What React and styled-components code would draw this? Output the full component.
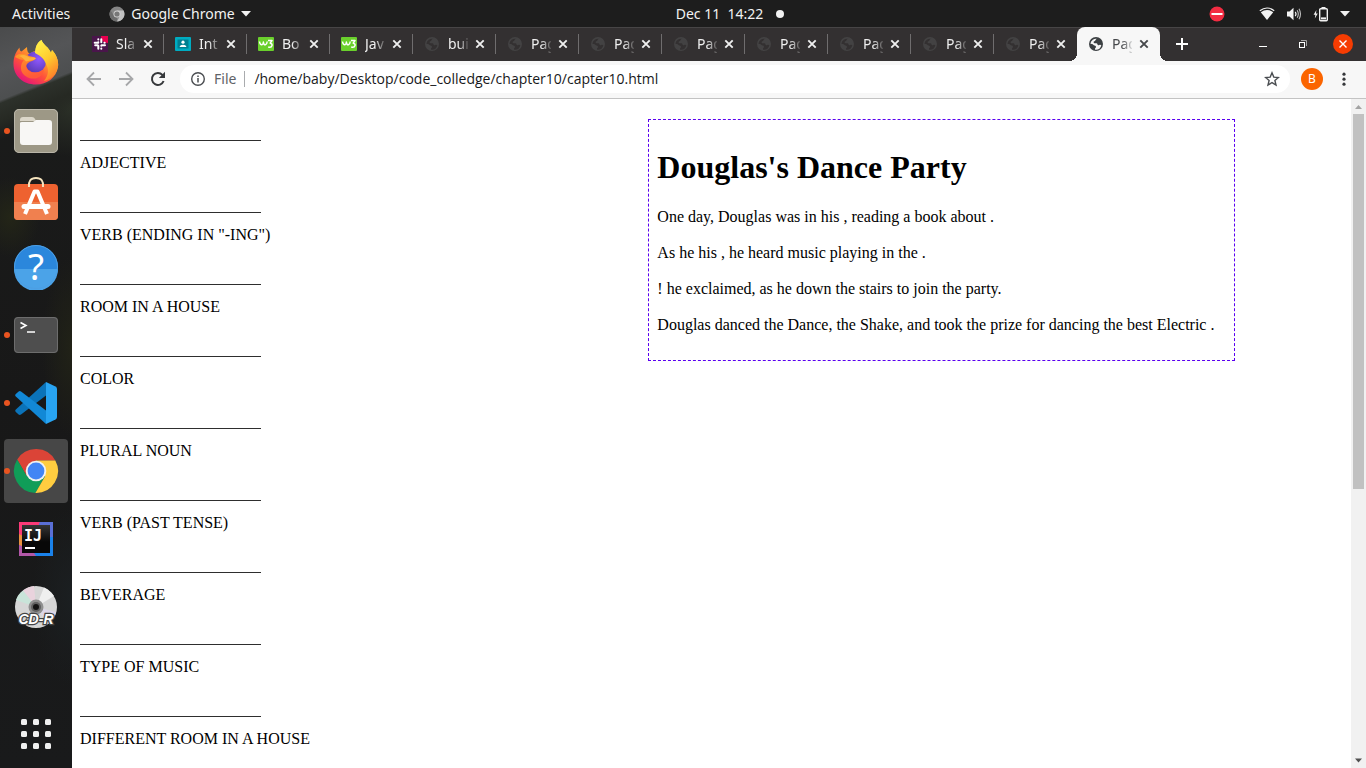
import React from 'react';
import styled, { createGlobalStyle } from 'styled-components';

const UI_FONT = '"Noto Sans", "Open Sans", sans-serif';
const PAGE_FONT = '"Liberation Serif", "Times New Roman", serif';

const GlobalStyle = createGlobalStyle`
  * { box-sizing: border-box; }
  body { margin: 0; background: #1d1d1d; }
  button { border: 0; padding: 0; background: none; color: inherit; font: inherit; }
  svg { display: block; flex: none; }
`;

const Desktop = styled.div`
  display: flex;
  flex-direction: column;
  min-height: 100vh;
  font-family: ${UI_FONT};
`;

/* ---------- GNOME top bar ---------- */

const TopBar = styled.header`
  display: grid;
  grid-template-columns: 676fr auto 582fr;
  align-items: center;
  height: 27px;
  background: #1d1d1d;
  color: #f2f2f2;
  font-size: 14px;
  line-height: 20px;
`;

const TopLeft = styled.div`
  display: flex;
  align-items: center;
  padding-left: 12px;
  gap: 39px;
`;

const AppMenu = styled.button`
  display: flex;
  align-items: center;
  gap: 6px;
`;

const Clock = styled.button`
  display: flex;
  align-items: center;
  gap: 13px;
  white-space: pre;
`;

const Tray = styled.div`
  display: flex;
  align-items: center;
  justify-content: flex-end;
  padding-right: 16px;
`;

const TrayGroup = styled.button`
  display: flex;
  align-items: center;
  gap: 11px;
  margin-left: 34px;
`;

/* ---------- Dock ---------- */

const Workspace = styled.div`
  display: flex;
  flex: 1;
`;

const Dock = styled.nav`
  display: flex;
  flex-direction: column;
  gap: 4px;
  width: 72px;
  padding: 4px 4px 2px;
  background:
    linear-gradient(158deg, #4a4b4c 0, #545557 40px, #4d4f50 68px, #2d312b 71px, #262923 88px, transparent 105px),
    radial-gradient(ellipse 50px 50px at 72px 80px, #2b3027, transparent),
    radial-gradient(ellipse 30px 40px at 10px 190px, #232517, transparent),
    radial-gradient(ellipse 30px 90px at 72px 320px, #212217, transparent),
    radial-gradient(ellipse 40px 90px at 72px 570px, #1b1f21, transparent),
    linear-gradient(#1b1c1b, #181818 50%, #191a1b);
`;

const DockItem = styled.button`
  position: relative;
  display: flex;
  align-items: center;
  justify-content: center;
  width: 64px;
  height: 64px;
  border-radius: 4px;
  background: ${(p) => (p.$active ? '#474747' : 'transparent')};
  &:last-child { margin-top: auto; }
`;

const RunningDot = styled.span`
  position: absolute;
  left: 0;
  top: 29px;
  width: 6px;
  height: 6px;
  border-radius: 50%;
  background: #e95420;
`;

/* ---------- Browser ---------- */

const Browser = styled.main`
  display: flex;
  flex-direction: column;
  flex: 1;
  min-width: 0;
`;

const TabStrip = styled.div`
  display: flex;
  align-items: stretch;
  height: 34px;
  padding-left: 9px;
  background: #333031;
  box-shadow: inset 0 1px #474546;
  color: #efefef;
`;

const TabBox = styled.div`
  position: relative;
  display: flex;
  align-items: center;
  width: 83px;
  padding-left: 11px;
  border-radius: 8px 8px 0 0;
  background: ${(p) => (p.$active ? '#f7f7f7' : 'transparent')};
  color: ${(p) => (p.$active ? '#45474a' : '#efefef')};

  &::before, &::after {
    content: '';
    display: ${(p) => (p.$active ? 'block' : 'none')};
    position: absolute;
    bottom: 0;
    width: 8px;
    height: 8px;
  }
  &::before {
    right: 100%;
    background: radial-gradient(circle at 0 0, transparent 8px, #f7f7f7 8px);
  }
  &::after {
    left: 100%;
    background: radial-gradient(circle at 100% 0, transparent 8px, #f7f7f7 8px);
  }
`;

const TabLabel = styled.button`
  width: 20px;
  margin-left: 8px;
  overflow: hidden;
  text-align: left;
  white-space: nowrap;
  font-size: 14px;
  line-height: 20px;
  mask-image: linear-gradient(to right, #000 10px, transparent 22px);
`;

const TabClose = styled.button`
  margin-left: 4px;
`;

const TabDivider = styled.span`
  width: 1px;
  height: 20px;
  margin-left: auto;
  background: ${(p) => (p.$hidden ? 'transparent' : '#6f6d6e')};
`;

const NewTab = styled.button`
  margin-left: 14px;
`;

const WindowControls = styled.div`
  display: flex;
  align-items: center;
  gap: 20px;
  margin-left: auto;
  padding-right: 13px;
`;

const Toolbar = styled.div`
  display: flex;
  align-items: center;
  height: 38px;
  padding: 0 14px 2px 14px;
  background: #f7f7f7;
  border-bottom: 1px solid #c3c3c3;
`;

const NavButtons = styled.div`
  display: flex;
  gap: 16px;
`;

const Omnibox = styled.div`
  display: flex;
  align-items: center;
  flex: 1;
  height: 28px;
  margin-left: 14px;
  padding: 0 10px;
  border-radius: 14px;
  background: #fff;
`;

const Scheme = styled.label`
  margin-left: 8px;
  padding-right: 8px;
  color: #5f6368;
  font-size: 14px;
  line-height: 16px;
  border-right: 1px solid #a9abae;
`;

const Address = styled.input`
  flex: 1;
  min-width: 0;
  padding: 0;
  margin-left: 9px;
  border: 0;
  outline: 0;
  background: transparent;
  color: #17181a;
  font-family: "Open Sans", "Noto Sans", sans-serif;
  font-size: 14px;
  line-height: 20px;
`;

const Avatar = styled.button`
  width: 22px;
  height: 22px;
  margin: 0 13px 0 11px;
  border-radius: 50%;
  background: #fb6500;
  color: #fff;
  font-size: 12px;
  line-height: 22px;
`;

/* ---------- Web page ---------- */

const Viewport = styled.div`
  display: flex;
  flex: 1;
  background: #fff;
`;

const Page = styled.div`
  display: flex;
  align-items: flex-start;
  flex: 1;
  padding: 20px 8px 0;
  color: #000;
  font-family: ${PAGE_FONT};
  font-size: 16px;
`;

const WordForm = styled.form`
  display: flex;
  flex-direction: column;
  gap: 20px;
  width: 45%;
`;

const Field = styled.div`
  display: flex;
  flex-direction: column;
  align-items: flex-start;
  gap: 13px;
`;

const WordInput = styled.input`
  width: 181px;
  height: 22px;
  padding: 0;
  border: 0;
  border-bottom: 1px solid #2e2e2e;
  outline: 0;
  background: transparent;
`;

const FieldLabel = styled.label`
  height: 17px;
  line-height: 18px;
`;

const Story = styled.article`
  box-sizing: content-box;
  width: 45%;
  padding: 8px 8px 9px;
  border: 1px dashed #5a00f0;
`;

const StoryTitle = styled.h1`
  margin: 21px 0;
  font-size: 32px;
  line-height: 37px;
`;

const StoryLine = styled.p`
  margin: 16px 0;
  line-height: 20px;
`;

const Scrollbar = styled.div`
  display: flex;
  flex-direction: column;
  width: 15px;
  background: #f1f1f1;
`;

const ScrollTrack = styled.div`
  display: flex;
  flex-direction: column;
  flex: 1;
  padding: 0 2px;

  &::after {
    content: '';
    flex: 264 0 0;
  }
`;

const ScrollThumb = styled.div`
  flex: 375 0 0;
  background: #c1c1c1;
`;

/* ---------- Icons ---------- */

const Caret = () => (
  <svg width="10" height="6" viewBox="0 0 10 6"><path d="M0 0H10L5 5.5Z" fill="#f2f2f2" /></svg>
);

const GreyChrome = () => (
  <svg width="16" height="16" viewBox="0 0 16 16">
    <circle cx="8" cy="8" r="7.5" fill="#868686" />
    <path d="M8 4.5H14.6A7.5 7.5 0 0 1 8 15.5L11 9.8Z" fill="#c2c2c2" />
    <path d="M1.5 4.2L5 9.8L8 11.4L8 15.5A7.5 7.5 0 0 1 1.5 4.2Z" fill="#6d6d6d" />
    <circle cx="8" cy="8" r="3.5" fill="#d2d2d2" />
    <circle cx="8" cy="8" r="2.6" fill="#777" />
  </svg>
);

const Busy = () => (
  <svg width="16" height="16" viewBox="0 0 16 16">
    <circle cx="8" cy="8" r="7.5" fill="#f22c42" />
    <rect x="2.5" y="7" width="11" height="2" fill="#fff" />
  </svg>
);

const Wifi = () => (
  <svg width="16" height="14" viewBox="0 0 16 14">
    <path d="M.8 3.8Q8-1.8 15.2 3.8" fill="none" stroke="#f2f2f2" strokeWidth="1.2" />
    <path d="M1.8 5.2Q8 1 14.2 5.2L8 13Z" fill="#f2f2f2" />
  </svg>
);

const Volume = () => (
  <svg width="16" height="14" viewBox="0 0 16 14">
    <path d="M1 4.5H3.5L7.5.8V13.2L3.5 9.5H1Z" fill="#f2f2f2" />
    <path d="M9.3 4.8Q10.8 7 9.3 9.2" fill="none" stroke="#f2f2f2" strokeWidth="1.3" />
    <path d="M11.2 3.2Q13.4 7 11.2 10.8M13 1.8Q16 7 13 12.2" fill="none" stroke="#bdbdbd" strokeWidth="1.1" />
  </svg>
);

const Battery = () => (
  <svg width="16" height="16" viewBox="0 0 16 16">
    <path d="M3.4 4L.6 8.8H2.4L1.8 12.4L4.8 7.4H3Z" fill="#f2f2f2" />
    <rect x="6.7" y="2.7" width="7.6" height="12" rx="1" fill="none" stroke="#f2f2f2" strokeWidth="1.4" />
    <rect x="8.5" y="1" width="4" height="1.6" fill="#f2f2f2" />
    <rect x="8" y="11.4" width="5" height="2" fill="#f2f2f2" />
  </svg>
);

const CloseX = () => (
  <svg width="16" height="16" viewBox="0 0 16 16">
    <path d="M4.3 4.3L11.7 11.7M11.7 4.3L4.3 11.7" stroke="currentColor" strokeWidth="1.9" />
  </svg>
);

const Globe = ({ color }) => (
  <svg width="16" height="16" viewBox="0 0 16 16">
    <path
      fill={color}
      fillRule="evenodd"
      d="M8 1A7 7 0 1 0 8 15A7 7 0 1 0 8 1ZM9.4 2.9C8.2 2.8 7.6 3.5 7.3 4.5C7 5.3 5.7 5 5.6 6C5.5 7 6.2 7.3 7.3 7.3C8.8 7.2 9.4 7.5 9.5 8.6C9.6 9.6 10.6 9.4 11.3 9.1C12.2 8.6 12.9 8.9 13.3 9.6A5.7 5.7 0 0 1 7.1 13.7C7 12.5 7 12 7.9 11.5C8.2 10.3 7.5 9.6 6.5 9.6C5.5 9.5 5.1 8.4 4 8.1L2.4 7.7A5.7 5.7 0 0 1 9.4 2.9Z"
    />
  </svg>
);

const SlackIcon = () => (
  <svg width="16" height="16" viewBox="0 0 16 16">
    <rect width="16" height="16" fill="#4a154b" />
    <path d="M9 0H16V7Q9 7 9 0Z" fill="#e8004f" />
    <g stroke="#fff" strokeWidth="2" strokeLinecap="round">
      <path d="M9.300 3.200V6.300M2.700 6.700H6M6.300 9.700V12.800M10 9.300H13" />
      <path d="M6.300 3.300V3.600M12.400 6.700H12.700M9.300 12.400V12.700M3.200 9.300H5.600M9.300 9.500V9.800M6.300 6.200V6.500" />
    </g>
  </svg>
);

const ContactIcon = () => (
  <svg width="16" height="16" viewBox="0 0 16 16">
    <rect y="1" width="16" height="14" rx="1" fill="#00acc1" />
    <rect x="2.5" y="3.5" width="11" height="9" fill="#007f91" />
    <circle cx="8" cy="6.2" r="1.6" fill="#fff" />
    <path d="M4.8 11V10Q8 7.4 11.2 10V11Z" fill="#fff" />
  </svg>
);

const W3Icon = () => (
  <svg width="16" height="16" viewBox="0 0 16 16">
    <rect y="1" width="16" height="14" rx="1" fill="#6ad02c" />
    <path d="M1.5 5.5Q2 9 4 8.7Q5.3 8.4 5.4 6Q5.6 9 7.5 8.7Q9 8.3 9.2 5.5M10 4.5H14L12.2 7.2Q14.4 7.6 14 9.6Q13.4 11.8 10.2 11" fill="none" stroke="#fff" strokeWidth="1.5" strokeLinejoin="round" />
  </svg>
);

const Plus = () => (
  <svg width="16" height="16" viewBox="0 0 16 16"><path d="M8 2V14M2 8H14" stroke="#fff" strokeWidth="2" /></svg>
);

const Minimise = () => (
  <svg width="20" height="20" viewBox="0 0 20 20"><path d="M6 12.5H14" stroke="#fff" /></svg>
);

const Restore = () => (
  <svg width="20" height="20" viewBox="0 0 20 20">
    <rect x="6.5" y="8.5" width="5" height="5" fill="none" stroke="#fff" />
    <path d="M8 6.5H13.5V12" fill="none" stroke="#a5a4a4" />
  </svg>
);

const WindowClose = () => (
  <svg width="20" height="20" viewBox="0 0 20 20">
    <circle cx="10" cy="10" r="10" fill="#f63c02" />
    <path d="M6.5 6.5L13.5 13.5M13.5 6.5L6.5 13.5" stroke="#fff" strokeWidth="1.4" />
  </svg>
);

const ArrowIcon = ({ flip }) => (
  <svg width="16" height="16" viewBox="0 0 16 16">
    <path d={flip ? 'M1 8H14M8 1.5L14.5 8L8 14.5' : 'M15 8H2M8 1.5L1.5 8L8 14.5'} fill="none" stroke="#a6a7a9" strokeWidth="1.8" />
  </svg>
);

const Reload = () => (
  <svg width="16" height="16" viewBox="0 0 16 16">
    <path d="M13.6 10A6 6 0 1 1 12.4 3.9L14 5.6" fill="none" stroke="#36383b" strokeWidth="2" />
    <path d="M15 .8V7H8.8Z" fill="#36383b" />
  </svg>
);

const Info = () => (
  <svg width="16" height="16" viewBox="0 0 16 16">
    <circle cx="8" cy="8" r="6.3" fill="none" stroke="#4a4d51" strokeWidth="1.4" />
    <path d="M8 7V11.5M8 4.4V6" stroke="#4a4d51" strokeWidth="1.5" />
  </svg>
);

const Star = () => (
  <svg width="16" height="16" viewBox="0 0 16 16">
    <path d="M8 1.8L9.8 6.1L14.4 6.5L10.9 9.5L12 14L8 11.6L4 14L5.1 9.5L1.6 6.5L6.2 6.1Z" fill="none" stroke="#4a4d51" strokeWidth="1.4" />
  </svg>
);

const MenuDots = () => (
  <svg width="16" height="16" viewBox="0 0 16 16" fill="#36383b" >
    <circle cx="8" cy="3.2" r="1.6" /><circle cx="8" cy="8.2" r="1.6" /><circle cx="8" cy="13.2" r="1.6" />
  </svg>
);

const ScrollArrow = ({ down }) => (
  <svg width="15" height="15" viewBox="0 0 15 15">
    <path d={down ? 'M4 5.5H11L7.5 9.5Z' : 'M4 10H11L7.5 6Z'} fill={down ? '#505050' : '#a3a3a3'} />
  </svg>
);

const Firefox = () => (
  <svg width="46" height="48" viewBox="0 0 46 48">
    <defs>
      <linearGradient id="ffBody" x1=".8" y1=".1" x2=".2" y2=".95">
        <stop offset="0" stopColor="#fff44f" /><stop offset=".35" stopColor="#ffa02a" />
        <stop offset=".65" stopColor="#ff4f3c" /><stop offset="1" stopColor="#e3127c" />
      </linearGradient>
      <linearGradient id="ffTail" x1=".2" y1="0" x2=".7" y2="1">
        <stop offset="0" stopColor="#fff14a" /><stop offset=".5" stopColor="#ffcb2e" /><stop offset="1" stopColor="#ff7a29" />
      </linearGradient>
      <linearGradient id="ffHead" x1="0" y1="0" x2=".3" y2="1">
        <stop offset="0" stopColor="#ff9a26" /><stop offset="1" stopColor="#ff5a38" />
      </linearGradient>
      <radialGradient id="ffGlobe" cx=".65" cy=".35" r=".7">
        <stop offset="0" stopColor="#9059ff" /><stop offset="1" stopColor="#5b3bb8" />
      </radialGradient>
    </defs>
    <path d="M28.5 1C30 6 36 8 38 14L39 11C43 15 46 22 45 28C43 39 34 45.500 23 45.500C10 45.500 .5 37 .5 25C.5 19 2 14 6.5 8.500C6.500 11 7 12 8.500 12.500C10.500 11 12 9.500 14 8C14 12 15 14 17 15C19 13 21 12 23 12C22 7 25 3 28.500 1Z" fill="url(#ffBody)" />
    <circle cx="22.500" cy="23" r="10.500" fill="url(#ffGlobe)" />
    <path d="M28.500 1C30 6 36 8 38 14L39 11C43 15 46 22 45 28C43 36 37 41 31 42C36 36 36 30 33 25C31 20 28 17 22 14C22 8 25 3 28.500 1Z" fill="url(#ffTail)" />
    <path d="M2 18C5 14 11 14 16 17C19 18 22 18 23 19.500C21 22 17 22 15 24C12 26 13 31 18 33C23 34.500 28 33 31 30C31 38 21 42 14 38C6 34 7 25 11 21C7 21 5 19 2 18Z" fill="url(#ffHead)" />
    <path d="M6 17C11 14.500 14 17 17 18.500C20 18 22 18.500 23 19.500C20 22 16 21.500 13 22.500C11 20 9 18 6 17Z" fill="#ffb13b" />
  </svg>
);

const Files = () => (
  <svg width="46" height="46" viewBox="0 0 46 46">
    <rect x="1" y="1" width="44" height="44" rx="5" fill="#9d9886" />
    <rect x="1.500" y="1.500" width="43" height="43" rx="4.500" fill="none" stroke="#b9b5a8" />
    <path d="M7 12Q7 9 10 9H19Q21 9 22 11L23 13H7Z" fill="#dcd7ca" />
    <path d="M7 15Q7 14 9 14H20L23 12H36Q39 12 39 15V34Q39 37 36 37H10Q7 37 7 34Z" fill="#f8f7f5" />
  </svg>
);

const Software = () => (
  <svg width="46" height="50" viewBox="0 0 46 50">
    <rect x="1" y="10" width="44" height="36" rx="4" fill="#ee6230" />
    <path d="M1 28H45V42Q45 46 41 46H5Q1 46 1 42Z" fill="#f0804f" />
    <path d="M16 13Q15 4 23 4T30 13" fill="none" stroke="#f5e3bd" strokeWidth="2" />
    <g stroke="#fff" fill="none" strokeLinejoin="round">
      <path d="M12 40L21.500 17.500H24.500L34 40" strokeWidth="4" />
      <path d="M11 32.500H35" strokeWidth="5" strokeLinecap="round" />
    </g>
  </svg>
);

const Help = () => (
  <svg width="46" height="46" viewBox="0 0 46 46">
    <circle cx="23" cy="23" r="22" fill="#2b87dc" />
    <path d="M1 25H45A22 22 0 0 1 1 25Z" fill="#4ba3e8" />
    <circle cx="23" cy="23" r="21.500" fill="none" stroke="#4d9fe4" />
    <text x="23" y="36" textAnchor="middle" fill="#fff" fontFamily='"Noto Sans", sans-serif' fontSize="37">?</text>
  </svg>
);

const Terminal = () => (
  <svg width="46" height="38" viewBox="0 0 46 38">
    <rect x="1" y="1" width="44" height="36" rx="4" fill="#4e4e4e" />
    <rect x="1.500" y="1.500" width="43" height="35" rx="3.500" fill="none" stroke="#6d6d6d" />
    <path d="M7.500 6.500L13 9.500L7.500 12.500M14 16H22" fill="none" stroke="#fff" strokeWidth="1.600" />
  </svg>
);

const VSCode = () => (
  <svg width="42" height="42" viewBox="0 0 42 42">
    <path d="M31 0L.8 27.500Q-.4 28.800.8 30L3.600 32.600Q4.800 33.500 6 32.600L31 13.500Z" fill="#0b73b9" />
    <path d="M31 42L.8 14.500Q-.4 13.200.8 12L3.600 9.400Q4.800 8.500 6 9.400L31 28.500Z" fill="#1288d6" />
    <path d="M31 0L40.500 4.500Q42 5.300 42 7V35Q42 36.700 40.500 37.500L31 42Z" fill="#28a4f2" />
  </svg>
);

const Chrome = () => (
  <svg width="46" height="46" viewBox="-23 -23 46 46">
    <path d="M19.300-10.500A22 22 0 0 0-18.800-11.500L-9.100 5.200L0 0V-10.500Z" fill="#db4437" />
    <path d="M-18.800-11.500A22 22 0 0 0-.6 22L9.100 5.200L0 0L-9.100 5.200Z" fill="#109d58" />
    <path d="M-.6 22A22 22 0 0 0 19.300-10.500H0V0L9.100 5.200Z" fill="#ffcd40" />
    <circle r="10.300" fill="#f1f1f1" />
    <circle r="8.400" fill="#4285f4" />
  </svg>
);

const IntelliJ = () => (
  <svg width="36" height="36" viewBox="0 0 36 36">
    <defs>
      <linearGradient id="ijDark" x1="0" y1="0" x2="0" y2="1">
        <stop offset="0" stopColor="#353535" /><stop offset=".6" stopColor="#080808" />
      </linearGradient>
    </defs>
    <rect x="1" y="1" width="34" height="34" fill="#1a82ea" />
    <path d="M1 1H22L18 18L1 20Z" fill="#fb3a78" />
    <path d="M22 1H35V16H16Z" fill="#5a6fd6" />
    <path d="M1 13L7 16V27L1 24Z" fill="#e8903f" />
    <path d="M1 24L14 29L18 35H1Z" fill="#b257a7" />
    <rect x="4" y="4" width="28" height="28" fill="url(#ijDark)" />
    <text x="6" y="20" fill="#fff" fontFamily='"DejaVu Sans Mono", monospace' fontWeight="700" fontSize="15">IJ</text>
    <rect x="7" y="26" width="10" height="2" fill="#fff" />
  </svg>
);

const Disc = () => (
  <svg width="44" height="46" viewBox="0 0 44 46">
    <circle cx="22" cy="23" r="21" fill="#d6d6d6" />
    <path d="M22 23L9 6.500Q14 2.500 20 2Z" fill="#e9d3dd" />
    <path d="M22 23L9 6.500Q4 10 2 16Z" fill="#c9e4d9" />
    <path d="M22 23L30 3.500Q36 6 40 12Z" fill="#efefef" />
    <path d="M22 23L42 28Q40 36 34 40Z" fill="#dcd6e8" />
    <circle cx="22" cy="23" r="7.500" fill="#8f8f8f" />
    <circle cx="22" cy="23" r="5" fill="#606060" />
    <circle cx="22" cy="23" r="3" fill="#131313" />
    <text x="22" y="40" textAnchor="middle" fill="#fff" stroke="#444" strokeWidth="2.500" paintOrder="stroke" fontFamily='"Liberation Sans", sans-serif' fontStyle="italic" fontWeight="700" fontSize="14">CD-R</text>
  </svg>
);

const AppGrid = () => (
  <svg width="30" height="30" viewBox="0 0 30 30" fill="#efefef">
    {[0, 12, 24].map((y) => [0, 12, 24].map((x) => (
      <rect key={`${x}-${y}`} x={x} y={y} width="6" height="6" rx="1.500" />
    )))}
  </svg>
);

/* ---------- Data ---------- */

const dockApps = [
  { name: 'Firefox', Icon: Firefox },
  { name: 'Files', Icon: Files, running: true },
  { name: 'Software', Icon: Software },
  { name: 'Help', Icon: Help },
  { name: 'Terminal', Icon: Terminal, running: true },
  { name: 'Code', Icon: VSCode, running: true },
  { name: 'Chrome', Icon: Chrome, running: true, active: true },
  { name: 'IntelliJ', Icon: IntelliJ },
  { name: 'Disc', Icon: Disc },
  { name: 'Applications', Icon: AppGrid },
];

const tabs = [
  { title: 'Sla', icon: <SlackIcon /> },
  { title: 'Int', icon: <ContactIcon /> },
  { title: 'Bo', icon: <W3Icon /> },
  { title: 'Jav', icon: <W3Icon /> },
  { title: 'bui' },
  ...Array.from({ length: 7 }, () => ({ title: 'Pag' })),
  { title: 'Pag', active: true },
];

const words = [
  'ADJECTIVE',
  'VERB (ENDING IN "-ING")',
  'ROOM IN A HOUSE',
  'COLOR',
  'PLURAL NOUN',
  'VERB (PAST TENSE)',
  'BEVERAGE',
  'TYPE OF MUSIC',
  'DIFFERENT ROOM IN A HOUSE',
];

const story = [
  'One day, Douglas was in his , reading a book about .',
  'As he his , he heard music playing in the .',
  '! he exclaimed, as he down the stairs to join the party.',
  'Douglas danced the Dance, the Shake, and took the prize for dancing the best Electric .',
];

export default function App() {
  return (
    <Desktop>
      <GlobalStyle />
      <TopBar>
        <TopLeft>
          <button type="button">Activities</button>
          <AppMenu type="button"><GreyChrome />Google Chrome<Caret /></AppMenu>
        </TopLeft>
        <Clock type="button">
          {'Dec 11  14:22'}
          <svg width="8" height="8" viewBox="0 0 8 8"><circle cx="4" cy="4" r="4" fill="#f2f2f2" /></svg>
        </Clock>
        <Tray>
          <Busy />
          <TrayGroup type="button" aria-label="System menu">
            <Wifi /><Volume /><Battery /><Caret />
          </TrayGroup>
        </Tray>
      </TopBar>

      <Workspace>
        <Dock>
          {dockApps.map(({ name, Icon, running, active }) => (
            <DockItem key={name} type="button" aria-label={name} $active={active}>
              {running && <RunningDot />}
              <Icon />
            </DockItem>
          ))}
        </Dock>

        <Browser>
          <TabStrip>
            {tabs.map((tab, i) => (
              <TabBox key={i} $active={tab.active}>
                {tab.icon || <Globe color={tab.active ? '#3c4043' : '#434243'} />}
                <TabLabel type="button">{tab.title}</TabLabel>
                <TabClose type="button" aria-label="Close tab"><CloseX /></TabClose>
                <TabDivider $hidden={i >= tabs.length - 2} />
              </TabBox>
            ))}
            <NewTab type="button" aria-label="New tab"><Plus /></NewTab>
            <WindowControls>
              <button type="button" aria-label="Minimise"><Minimise /></button>
              <button type="button" aria-label="Restore"><Restore /></button>
              <button type="button" aria-label="Close"><WindowClose /></button>
            </WindowControls>
          </TabStrip>

          <Toolbar>
            <NavButtons>
              <button type="button" aria-label="Back"><ArrowIcon /></button>
              <button type="button" aria-label="Forward"><ArrowIcon flip /></button>
              <button type="button" aria-label="Reload"><Reload /></button>
            </NavButtons>
            <Omnibox>
              <Info />
              <Scheme htmlFor="address">File</Scheme>
              <Address id="address" type="text" defaultValue="/home/baby/Desktop/code_colledge/chapter10/capter10.html" />
              <button type="button" aria-label="Bookmark"><Star /></button>
            </Omnibox>
            <Avatar type="button">B</Avatar>
            <button type="button" aria-label="Menu"><MenuDots /></button>
          </Toolbar>

          <Viewport>
            <Page>
              <WordForm>
                {words.map((word, i) => (
                  <Field key={word}>
                    <WordInput id={`word-${i}`} type="text" />
                    <FieldLabel htmlFor={`word-${i}`}>{word}</FieldLabel>
                  </Field>
                ))}
              </WordForm>
              <Story>
                <StoryTitle>Douglas's Dance Party</StoryTitle>
                {story.map((line) => <StoryLine key={line}>{line}</StoryLine>)}
              </Story>
            </Page>
            <Scrollbar>
              <ScrollArrow />
              <ScrollTrack><ScrollThumb /></ScrollTrack>
              <ScrollArrow down />
            </Scrollbar>
          </Viewport>
        </Browser>
      </Workspace>
    </Desktop>
  );
}
